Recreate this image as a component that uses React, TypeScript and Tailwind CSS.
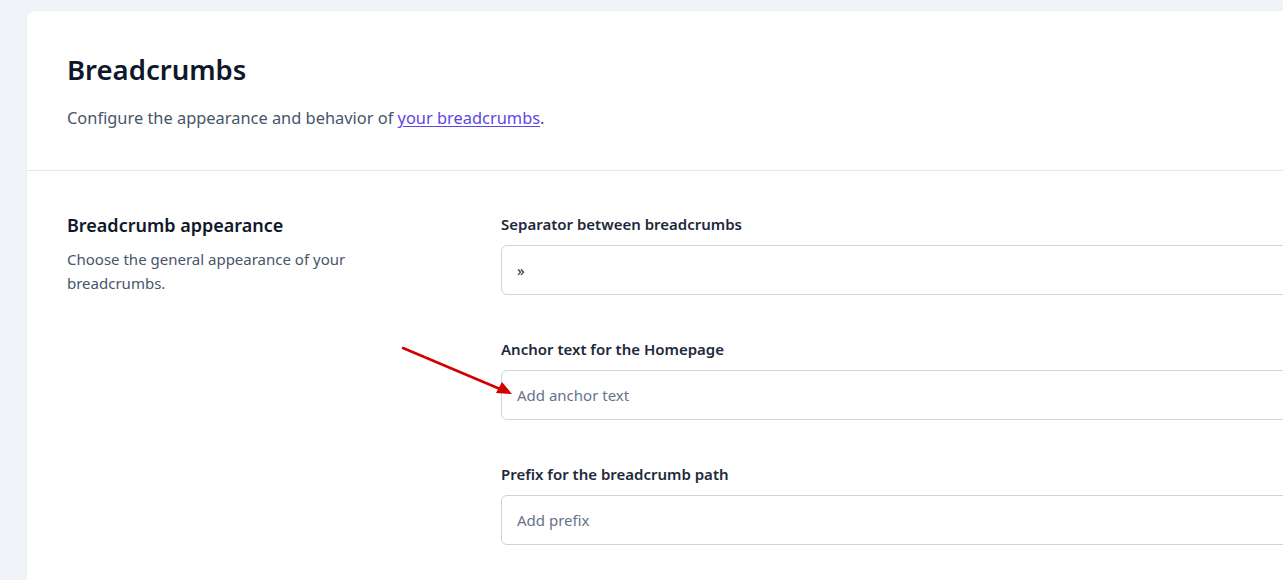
// Breadcrumbs settings panel
const font = { fontFamily: '"Noto Sans", "Open Sans", Arial, sans-serif' }

interface FieldProps {
    label: string
    value?: string
    placeholder?: string
}

function Field({ label, value, placeholder }: FieldProps) {
    return (
        <div className="flex flex-col">
            <label className="text-[15px] leading-[28px] font-semibold text-[#1e293b]">{label}</label>
            <input
                readOnly
                defaultValue={value}
                placeholder={placeholder}
                className="mt-[7px] h-[50px] w-[840px] rounded-md border border-[#cbd5e1] bg-white px-[15px] text-[15px] text-[#1e293b] placeholder:text-[#64748b] outline-none"
                style={font}
            />
        </div>
    )
}

export default function App() {
    return (
        <div className="relative h-[580px] w-[1283px] overflow-hidden bg-[#f0f3f8]" style={font}>
            <div className="ml-[27px] mt-[11px] w-[1320px] rounded-lg bg-white shadow-[0_0_1px_rgba(15,23,42,0.08)]">
                {/* header */}
                <div className="border-b border-[#e2e8f0] px-10 pt-[39px] pb-10">
                    <h1 className="text-[27.5px] leading-10 font-semibold text-[#0f172a]">Breadcrumbs</h1>
                    <p className="mt-4 text-[16.4px] leading-6 text-[#475569]">
                        Configure the appearance and behavior of{' '}
                        <a href="#" className="text-[#6046e6] underline underline-offset-2">your breadcrumbs</a>.
                    </p>
                </div>

                {/* appearance section */}
                <div className="flex px-10 pt-[39px] pb-10">
                    <div className="mt-px w-[434px] shrink-0">
                        <h2 className="text-lg leading-7 font-semibold text-[#0f172a]">Breadcrumb appearance</h2>
                        <p className="mt-2 max-w-[320px] text-[15px] leading-6 text-[#475569]">
                            Choose the general appearance of your breadcrumbs.
                        </p>
                    </div>
                    <div className="flex flex-col gap-10">
                        <Field label="Separator between breadcrumbs" value="»" />
                        <Field label="Anchor text for the Homepage" placeholder="Add anchor text" />
                        <Field label="Prefix for the breadcrumb path" placeholder="Add prefix" />
                    </div>
                </div>
            </div>

            {/* red annotation arrow */}
            <svg className="pointer-events-none absolute left-0 top-0" width="1283" height="580">
                <line x1="403" y1="348" x2="500" y2="389" stroke="#d40000" strokeWidth="2.5" strokeLinecap="round" />
                <polygon points="512,394 496,393 502,382" fill="#d40000" />
            </svg>
        </div>
    )
}
